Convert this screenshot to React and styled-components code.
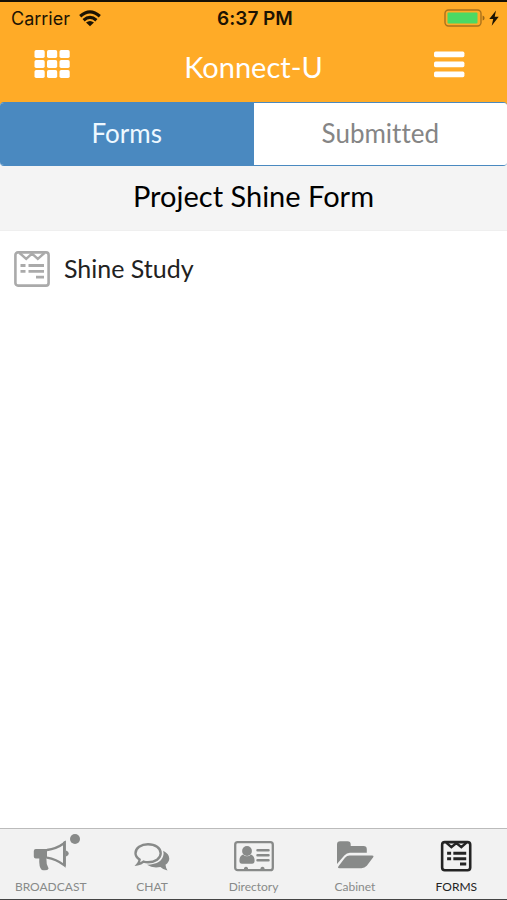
import React, { useState } from 'react';
import styled, { createGlobalStyle } from 'styled-components';

const colors = {
  orange: '#ffab27',
  blue: '#4a89c0',
  bar: '#f4f4f4',
  nav: '#f2f2f2',
  grey: '#888a89',
  dark: '#242424',
  white: '#fff'
};

const fonts = {
  app: `Lato, 'Open Sans', sans-serif`,
  system: `Inter, 'Liberation Sans', sans-serif`
};

const GlobalStyle = createGlobalStyle`
  * {
    box-sizing: border-box;
  }
  body {
    margin: 0;
    background: ${colors.white};
    font-family: ${fonts.app};
    font-variant-ligatures: none;
  }
  button {
    border: 0;
    padding: 0;
    background: none;
    font: inherit;
    font-variant-ligatures: none;
    color: inherit;
    cursor: pointer;
  }
  svg {
    display: block;
  }
`;

const StyledScreen = styled.div`
  min-height: 100vh;
  display: flex;
  flex-direction: column;
  border-top: 2px solid #151006;
  border-bottom: 1px solid #444;
`;

const StyledTop = styled.header`
  background: ${colors.orange};
`;

const StyledStatus = styled.div`
  display: grid;
  grid-template-columns: 1fr auto 1fr;
  align-items: center;
  height: 32px;
  padding: 0 8px 0 11px;
  font-family: ${fonts.system};
  font-size: 18px;
  color: #1c1303;
`;

const StyledStatusGroup = styled.div`
  display: flex;
  align-items: center;
  justify-content: ${({ $end }) => ($end ? 'flex-end' : 'flex-start')};
  gap: ${({ $end }) => ($end ? '4px' : '9px')};
`;

const StyledTime = styled.span`
  font-size: 19px;
  font-weight: 600;
`;

const StyledHeader = styled.div`
  display: grid;
  grid-template-columns: 1fr auto 1fr;
  align-items: center;
  height: 68px;
  padding: 0 42px 8px 42px;
  color: ${colors.white};
`;

const StyledHeaderButton = styled.button`
  justify-self: ${({ $end }) => ($end ? 'end' : 'start')};
  margin-left: ${({ $end }) => ($end ? '0' : '-8px')};
`;

const StyledTitle = styled.h1`
  margin: 0;
  padding-top: 6px;
  font-size: 29px;
  line-height: 34px;
  font-weight: 400;
`;

const StyledTabs = styled.div`
  display: flex;
  height: 64px;
  border: 1px solid ${colors.blue};
  border-width: 1px 0;
  border-radius: 4px;
  overflow: hidden;
  background: ${colors.white};
`;

const StyledTabsWrapper = styled.div`
  background: linear-gradient(${colors.orange} 50%, ${colors.bar} 50%);
`;

const StyledTab = styled.button`
  flex: 1;
  && {
    padding-bottom: 2px;
    color: ${({ $active }) => ($active ? '#eef8ff' : '#858585')};
    background: ${({ $active }) => ($active ? colors.blue : colors.white)};
  }
  && {
    font-size: 26px;
    line-height: 30px;
  }
`;

const StyledSection = styled.h2`
  margin: 0;
  height: 65px;
  display: flex;
  align-items: center;
  justify-content: center;
  padding-bottom: 4px;
  border-bottom: 1px solid #efefef;
  background: ${colors.bar};
  font-size: 29px;
  line-height: 34px;
  font-weight: 400;
  color: #000;
`;

const StyledMain = styled.main`
  flex: 1;
`;

const StyledRow = styled.button`
  width: 100%;
  height: 76px;
  display: flex;
  align-items: center;
  gap: 14px;
  && {
    padding: 0 14px;
    color: #222;
  }
  font-size: 25px;
  line-height: 30px;
  svg {
    color: #aaa;
  }
`;

const StyledRowText = styled.span`
  padding-bottom: 2px;
`;

const StyledNav = styled.nav`
  display: flex;
  height: 71px;
  border-top: 1px solid #bbb;
  background: ${colors.nav};
`;

const StyledNavItem = styled.button`
  flex: 1 1 0;
  display: flex;
  flex-direction: column;
  align-items: center;
  && {
    padding-top: 11px;
    color: ${({ $active }) => ($active ? colors.dark : colors.grey)};
  }
  font-size: 12px;
  line-height: 16px;
`;

const StyledNavIcon = styled.span`
  position: relative;
  margin-bottom: 7px;
`;

const StyledDot = styled.span`
  position: absolute;
  top: -6px;
  right: -11px;
  width: 10px;
  height: 10px;
  border-radius: 100%;
  background: ${colors.grey};
`;

const WifiIcon = () => (
  <svg width="22" height="17" viewBox="0 0 22 17" fill="none" stroke="currentColor" strokeWidth="3.2">
    <path d="M1.2 6.2Q11-2.4 20.8 6.2" />
    <path d="M4.6 10.2Q11 4.6 17.4 10.2" />
    <path d="M11 16.3 7 12.6Q11 9.4 15 12.6Z" fill="currentColor" stroke="none" />
  </svg>
);

const BatteryIcon = () => (
  <svg width="41" height="18" viewBox="0 0 41 18">
    <rect x="1" y="1" width="36" height="16" rx="3.5" fill="none" stroke="#ab721c" strokeWidth="1.4" />
    <rect x="3.5" y="3.5" width="30" height="11" rx="1" fill="#4bd964" />
    <path d="M38.6 6.4Q40.6 7 40.6 9T38.6 11.6Z" fill="#9b6818" />
  </svg>
);

const BoltIcon = () => (
  <svg width="10" height="16" viewBox="0 0 10 16" fill="currentColor">
    <path d="M7 .5.3 9H4.2L2.7 15.7 9.7 6.8H5.7Z" />
  </svg>
);

const GridIcon = () => (
  <svg width="36" height="28" viewBox="0 0 36 28" fill="currentColor">
    {[0, 10, 20].map(y =>
      [0.5, 13, 25.5].map(x => <rect key={`${x}-${y}`} x={x} y={y} width="10.2" height="8" rx="1.7" />)
    )}
  </svg>
);

const MenuIcon = () => (
  <svg width="31" height="28" viewBox="0 0 31 28" fill="currentColor">
    {[1.6, 11.6, 21.6].map(y => (
      <rect key={y} x="0" y={y} width="30.4" height="5.6" rx="1.6" />
    ))}
  </svg>
);

const FormIcon = () => (
  <svg width="36" height="36" viewBox="0 0 36 36" fill="none" stroke="currentColor">
    <rect x="1.4" y="1.4" width="33.2" height="33.2" rx="2.6" strokeWidth="2.6" />
    <path d="M5.5 2 12.2 7.8 18 2.6 23.8 7.8 30.5 2" strokeWidth="2.4" />
    <path d="M6.5 14.5h5M14.5 14.5h15.5M6.5 20.3h5M14.5 20.3h15.5M22 26.2h8" strokeWidth="2.8" />
  </svg>
);

const BroadcastIcon = () => (
  <svg width="36" height="32" viewBox="0 0 36 32" fill="currentColor">
    <path d="M2.8 9H14V18.4H13.4Q13 24 15.6 28.4 14.6 31.2 8.8 30 5.7 27 6.3 18.4H2.8Q.8 18.4 .8 16.4V11Q.8 9 2.8 9Z" />
    <path d="M14 10Q23 9 31.5 3V25.4Q23 18.8 14 17.6" fill="none" stroke="currentColor" strokeWidth="2.3" />
    <path d="M30 2 32.8 .4V26.2L30 24.5ZM33 10.5Q35.8 11.5 35.8 13.5T33 16.6Z" />
  </svg>
);

const ChatIcon = () => (
  <svg width="36" height="32" viewBox="0 0 36 32" fill="currentColor">
    <path
      d="M14 4.2C21.2 4.2 26.7 8.2 26.7 13.3S21.2 22.2 14 22.2Q11.8 22.2 9.5 21.6 7 23.7 3.6 24.3 5.2 22.4 5.6 19.6 1.5 17 1.5 13.3C1.5 8.2 7 4.2 14 4.2Z"
      fill="none"
      stroke="currentColor"
      strokeWidth="2.4"
    />
    <path d="M29.2 10.8Q35.3 14 35.3 18.5 35.3 22.1 31.5 24.8 31.8 27.9 33.5 30.5 29.2 29.8 26.4 27 18.5 28.5 13 24.8 28.7 24.2 29.6 13.8Z" />
  </svg>
);

const DirectoryIcon = () => (
  <svg width="40" height="32" viewBox="0 0 40 32" fill="currentColor">
    <rect x="1.2" y="2.2" width="37.6" height="28" rx="2.5" fill="none" stroke="currentColor" strokeWidth="2.3" />
    <circle cx="13" cy="11" r="4.9" />
    <path d="M9 14.5Q13 18.2 17 14.5 20.6 16 20.6 20.5 20.6 23.8 18 23.8H8Q5.4 23.8 5.4 20.5 5.4 16 9 14.5ZM10 30V28Q12 25.4 14 28V30ZM26.5 30V28Q28.5 25.4 30.5 28V30Z" />
    <path d="M23.5 10.2H34.5M23.5 15.2H34.5M23.5 20.2H34.5" stroke="currentColor" strokeWidth="2.5" strokeLinecap="round" />
  </svg>
);

const CabinetIcon = () => (
  <svg width="38" height="32" viewBox="0 0 38 32" fill="currentColor">
    <path d="M1 24V4.5Q1 1.2 4.2 1.2H11.5Q14.7 1.2 14.7 4.5V6H27.5Q30.8 6 30.8 9.3V12.8H14Q10.7 12.8 8.3 15.6Z" />
    <path d="M13.5 15.5H36Q38.4 15.5 37 17.6L30.8 25.8Q28.6 28.2 25.5 28.2H3.5Q1.2 28.2 2.5 26.2L9 17.8Q11 15.5 13.5 15.5Z" />
  </svg>
);

const NavFormIcon = () => (
  <svg width="32" height="32" viewBox="0 0 36 36" fill="none" stroke="currentColor">
    <rect x="2.4" y="2.4" width="31.6" height="31.6" rx="3" strokeWidth="2.9" />
    <path d="M7 3 12.8 8 18.4 3.4 24 8 29.8 3" strokeWidth="2.8" />
    <path d="M8 15h4.5M15 15h14.5M8 21h4.5M15 21h14.5M22.5 27h7" strokeWidth="3.3" />
  </svg>
);

const navItems = [
  { label: 'BROADCAST', Icon: BroadcastIcon, dot: true },
  { label: 'CHAT', Icon: ChatIcon },
  { label: 'Directory', Icon: DirectoryIcon },
  { label: 'Cabinet', Icon: CabinetIcon },
  { label: 'FORMS', Icon: NavFormIcon }
];

const App = () => {
  const [tab, setTab] = useState('Forms');
  const [page, setPage] = useState('FORMS');
  return (
    <StyledScreen>
      <GlobalStyle />
      <StyledTop>
        <StyledStatus>
          <StyledStatusGroup>
            <span>Carrier</span>
            <WifiIcon />
          </StyledStatusGroup>
          <StyledTime>6:37 PM</StyledTime>
          <StyledStatusGroup $end>
            <BatteryIcon />
            <BoltIcon />
          </StyledStatusGroup>
        </StyledStatus>
        <StyledHeader>
          <StyledHeaderButton type="button" aria-label="Apps">
            <GridIcon />
          </StyledHeaderButton>
          <StyledTitle>Konnect-U</StyledTitle>
          <StyledHeaderButton $end type="button" aria-label="Menu">
            <MenuIcon />
          </StyledHeaderButton>
        </StyledHeader>
      </StyledTop>
      <StyledTabsWrapper>
        <StyledTabs>
          {['Forms', 'Submitted'].map(name => (
            <StyledTab key={name} type="button" $active={tab === name} onClick={() => setTab(name)}>
              {name}
            </StyledTab>
          ))}
        </StyledTabs>
      </StyledTabsWrapper>
      <StyledSection>Project Shine Form</StyledSection>
      <StyledMain>
        <StyledRow type="button">
          <FormIcon />
          <StyledRowText>Shine Study</StyledRowText>
        </StyledRow>
      </StyledMain>
      <StyledNav>
        {navItems.map(({ label, Icon, dot }) => (
          <StyledNavItem key={label} type="button" $active={page === label} onClick={() => setPage(label)}>
            <StyledNavIcon>
              <Icon />
              {dot && <StyledDot />}
            </StyledNavIcon>
            {label}
          </StyledNavItem>
        ))}
      </StyledNav>
    </StyledScreen>
  );
};

export default App;
